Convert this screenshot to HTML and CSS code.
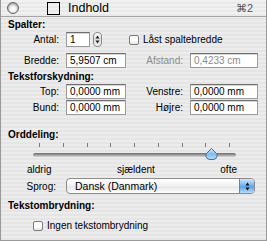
FILE: index.html
```html
<!DOCTYPE html>
<html lang="da">
<head>
    <meta charset="UTF-8">
    <meta name="viewport" content="width=device-width, initial-scale=1.0">
    <title>Indhold</title>
    <link rel="stylesheet" href="styles.css">
</head>
<body>
<div class="panel">
    <div class="titlebar">
        <span class="collapse"></span>
        <span class="winbox"></span>
        <span class="title">Indhold</span>
        <span class="shortcut">&#8984;2</span>
    </div>

    <div class="content">
        <h3 class="heading">Spalter:</h3>
        <div class="row">
            <span class="lbl">Antal:</span>
            <span class="field small">1</span>
            <span class="stepper">
                <svg width="5" height="9" viewBox="0 0 5 9"><path d="M2.5 0.5 L4.5 3.5 L0.5 3.5 Z M2.5 8.5 L4.5 5.5 L0.5 5.5 Z" fill="#222"/></svg>
            </span>
            <span class="check lock"><span class="cb"></span>Låst spaltebredde</span>
        </div>
        <div class="row gap-top">
            <span class="lbl">Bredde:</span>
            <span class="field">5,9507 cm</span>
            <span class="lbl right dim">Afstand:</span>
            <span class="field wide dim">0,4233 cm</span>
        </div>

        <h3 class="heading sec">Tekstforskydning:</h3>
        <div class="row">
            <span class="lbl">Top:</span>
            <span class="field">0,0000 mm</span>
            <span class="lbl right">Venstre:</span>
            <span class="field wide">0,0000 mm</span>
        </div>
        <div class="row gap-small">
            <span class="lbl">Bund:</span>
            <span class="field">0,0000 mm</span>
            <span class="lbl right">Højre:</span>
            <span class="field wide">0,0000 mm</span>
        </div>

        <h3 class="heading sec2">Orddeling:</h3>
        <div class="slider">
            <div class="ticks">
                <i></i><i></i><i></i><i></i><i></i><i></i><i></i><i></i><i></i>
            </div>
            <div class="track">
                <svg class="knob" width="13" height="12" viewBox="0 0 13 12">
                    <defs>
                        <linearGradient id="kg" x1="0" y1="0" x2="0" y2="1">
                            <stop offset="0" stop-color="#d7ecfb"/>
                            <stop offset="0.5" stop-color="#7fbcec"/>
                            <stop offset="1" stop-color="#b8e0fb"/>
                        </linearGradient>
                    </defs>
                    <path d="M6.5 0.5 L11.5 5.5 Q12.5 6.5 12 8.5 Q11.2 11.5 8 11.5 L5 11.5 Q1.8 11.5 1 8.5 Q0.5 6.5 1.5 5.5 Z" fill="url(#kg)" stroke="#3b6ea5" stroke-width="1"/>
                </svg>
            </div>
            <div class="marks">
                <span>aldrig</span>
                <span>sjældent</span>
                <span>ofte</span>
            </div>
        </div>

        <div class="row lang">
            <span class="lbl short">Sprog:</span>
            <span class="popup">
                <span class="popup-text">Dansk (Danmark)</span>
                <span class="popup-arrows">
                    <svg width="5" height="9" viewBox="0 0 5 9"><path d="M2.5 0.5 L4.5 3.5 L0.5 3.5 Z M2.5 8.5 L4.5 5.5 L0.5 5.5 Z" fill="#111"/></svg>
                </span>
            </span>
        </div>

        <h3 class="heading sec3">Tekstombrydning:</h3>
        <div class="row nowrap">
            <span class="check"><span class="cb"></span>Ingen tekstombrydning</span>
        </div>
    </div>
</div>
</body>
</html>
```

FILE: styles.css
```css
body {
    margin: 0;
    font-family: "Lucida Grande", "Liberation Sans", Arial, sans-serif;
    font-size: 10px;
    color: #000;
    background: #fff;
}
.panel {
    width: 265px;
    height: 240px;
    border: 1px solid #9a9a9a;
    border-top: none;
    background: repeating-linear-gradient(#ececec 0, #ececec 2px, #e5e5e5 2px, #e5e5e5 4px);
    overflow: hidden;
}
.titlebar {
    height: 16px;
    display: flex;
    align-items: center;
    border-bottom: 1px solid #a5a5a5;
    background: repeating-linear-gradient(#f1f1f1 0, #f1f1f1 2px, #e9e9e9 2px, #e9e9e9 4px);
}
.collapse {
    width: 10px;
    height: 10px;
    margin-left: 6px;
    border-radius: 50%;
    border: 1px solid #666;
    background: radial-gradient(circle at 50% 60%, #ffffff 0, #f4f4f4 35%, #9d9d9d 80%, #6f6f6f 100%);
}
.winbox {
    width: 11px;
    height: 11px;
    margin-left: 28px;
    border: 1px solid #000;
}
.title {
    margin-left: 8px;
    font-size: 12.5px;
}
.shortcut {
    margin-left: auto;
    margin-right: 13px;
    font-size: 11px;
    color: #555;
}
.content {
    padding: 2px 7px 0 7px;
}
.heading {
    margin: 0;
    font-size: 10px;
    font-weight: bold;
    line-height: 12px;
}
.heading.sec {
    margin-top: 3px;
}
.heading.sec2 {
    margin-top: 14px;
}
.heading.sec3 {
    margin-top: 6px;
}
.row {
    display: flex;
    align-items: center;
    height: 15px;
    margin-top: 1px;
}
.row.gap-top {
    margin-top: 6px;
}
.row.gap-small {
    margin-top: 1px;
}
.lbl {
    width: 51px;
    margin-right: 7px;
    text-align: right;
}
.lbl.right {
    width: 57px;
    margin-right: 7px;
}
.lbl.short {
    width: 48px;
    margin-right: 10px;
}
.dim {
    color: #8c8c8c;
}
.field {
    box-sizing: border-box;
    width: 60px;
    height: 15px;
    padding: 0 3px;
    line-height: 13px;
    background: #fff;
    border: 1px solid #9b9b9b;
    border-top-color: #6f6f6f;
    box-shadow: inset 0 1px 0 #d6d6d6;
    white-space: nowrap;
    overflow: hidden;
}
.field.small {
    width: 24px;
}
.field.wide {
    width: 68px;
}
.stepper {
    box-sizing: border-box;
    width: 9px;
    height: 15px;
    margin-left: 3px;
    display: flex;
    align-items: center;
    justify-content: center;
    border: 1px solid #8a8a8a;
    border-radius: 4px;
    background: linear-gradient(#ffffff, #dcdcdc 50%, #f4f4f4);
}
.check {
    display: flex;
    align-items: center;
}
.check.lock {
    margin-left: 27px;
}
.cb {
    box-sizing: border-box;
    width: 10px;
    height: 10px;
    margin-right: 4px;
    border: 1px solid #7c7c7c;
    border-radius: 2px;
    background: linear-gradient(#f6f6f6, #ffffff 60%, #e2e2e2);
}
.slider {
    margin-left: 25px;
    width: 203px;
    margin-top: 2px;
}
.ticks {
    display: flex;
    justify-content: space-between;
    padding: 0 6px 0 6px;
    height: 4px;
}
.ticks i {
    width: 1px;
    height: 4px;
    background: #7a7a7a;
}
.track {
    position: relative;
    height: 4px;
    margin-top: 6px;
    border-radius: 2px;
    background: linear-gradient(#6a6a6a, #a9a9a9 60%, #d8d8d8);
}
.knob {
    position: absolute;
    left: 172px;
    top: -5px;
}
.marks {
    display: flex;
    justify-content: space-between;
    margin: 7px 0 0 -6px;
    width: 210px;
    line-height: 12px;
}
.row.lang {
    height: 16px;
    margin-top: 2px;
}
.popup {
    box-sizing: border-box;
    width: 189px;
    height: 16px;
    display: flex;
    align-items: center;
    border: 1px solid #8c8c8c;
    border-radius: 4px;
    background: linear-gradient(#ffffff, #f1f1f1 50%, #e6e6e6 55%, #fdfdfd);
    overflow: hidden;
}
.popup-text {
    flex: 1;
    padding-left: 8px;
    font-size: 10.5px;
}
.popup-arrows {
    width: 14px;
    height: 14px;
    display: flex;
    align-items: center;
    justify-content: center;
    border-left: 1px solid #5a86c0;
    background: linear-gradient(#cfe6fb, #6eaef0 50%, #5aa0ea 55%, #b9ddfb);
}
.row.nowrap {
    margin-top: 6px;
    padding-left: 25px;
}
```
